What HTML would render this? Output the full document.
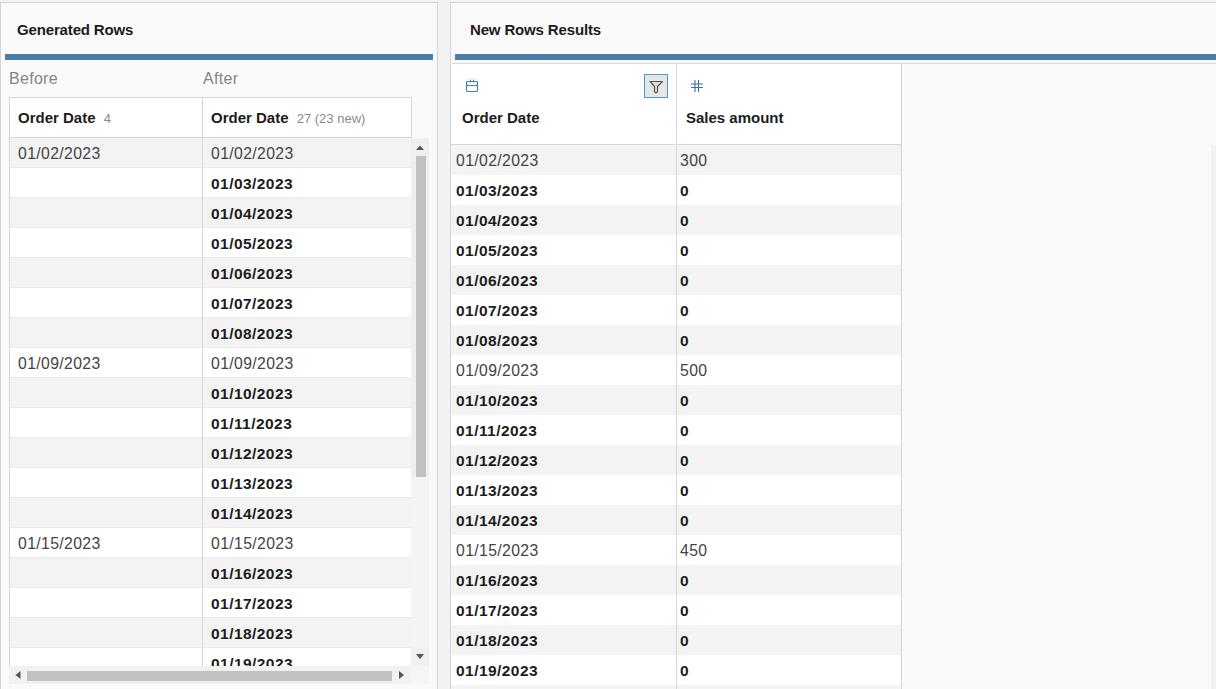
<!DOCTYPE html><html><head><meta charset="utf-8"><style>
*{margin:0;padding:0;box-sizing:border-box}
html,body{width:1216px;height:689px;overflow:hidden;background:#f2f2f2;font-family:"Liberation Sans",sans-serif}
.a{position:absolute}
.t{position:absolute;white-space:nowrap;line-height:16px}
.ttl{font-size:15px;font-weight:bold;color:#1c1c1c;letter-spacing:-0.15px}
.bar{position:absolute;top:53px;height:8px;background:#4a7ea8;border:1px solid #fff}
.lbl{font-size:16px;color:#858585;letter-spacing:0.3px}
.hd{font-size:15px;font-weight:bold;color:#1c1c1c}
.cnt{font-size:13px;font-weight:normal;color:#8a8a8a}
.r{font-size:15.75px;color:#444;letter-spacing:0.38px}
.b{font-size:15.5px;font-weight:bold;color:#1c1c1c;letter-spacing:0.45px}
</style></head><body>
<div class="a" style="left:0;top:2px;width:438px;height:700px;background:#fafafa;border:1px solid #d4d4d4;border-bottom:none"></div>
<div class="t ttl" style="left:17px;top:22px">Generated Rows</div>
<div class="bar" style="left:4px;width:430px"></div>
<div class="t lbl" style="left:9px;top:71px">Before</div>
<div class="t lbl" style="left:203px;top:71px">After</div>
<div class="a" style="left:9px;top:97px;width:403px;height:41px;background:#fff;border:1px solid #d6d6d6"></div>
<div class="a" style="left:202px;top:97px;width:1px;height:569px;background:#d6d6d6"></div>
<div class="t hd" style="left:18px;top:110px">Order Date <span class="cnt" style="margin-left:4px">4</span></div>
<div class="t hd" style="left:211px;top:110px">Order Date <span class="cnt" style="margin-left:4px">27 (23 new)</span></div>
<div class="a" style="left:9px;top:138px;width:402px;height:528px;overflow:hidden;border-left:1px solid #d6d6d6">
<div class="a" style="left:0;top:0px;width:401px;height:30px;background:#f3f3f3;border-bottom:1px solid #ebebeb"></div>
<div class="t r" style="left:8px;top:8px">01/02/2023</div>
<div class="t r" style="left:201px;top:8px">01/02/2023</div>
<div class="a" style="left:0;top:30px;width:401px;height:30px;background:#ffffff;border-bottom:1px solid #ebebeb"></div>
<div class="t b" style="left:201px;top:38px">01/03/2023</div>
<div class="a" style="left:0;top:60px;width:401px;height:30px;background:#f3f3f3;border-bottom:1px solid #ebebeb"></div>
<div class="t b" style="left:201px;top:68px">01/04/2023</div>
<div class="a" style="left:0;top:90px;width:401px;height:30px;background:#ffffff;border-bottom:1px solid #ebebeb"></div>
<div class="t b" style="left:201px;top:98px">01/05/2023</div>
<div class="a" style="left:0;top:120px;width:401px;height:30px;background:#f3f3f3;border-bottom:1px solid #ebebeb"></div>
<div class="t b" style="left:201px;top:128px">01/06/2023</div>
<div class="a" style="left:0;top:150px;width:401px;height:30px;background:#ffffff;border-bottom:1px solid #ebebeb"></div>
<div class="t b" style="left:201px;top:158px">01/07/2023</div>
<div class="a" style="left:0;top:180px;width:401px;height:30px;background:#f3f3f3;border-bottom:1px solid #ebebeb"></div>
<div class="t b" style="left:201px;top:188px">01/08/2023</div>
<div class="a" style="left:0;top:210px;width:401px;height:30px;background:#ffffff;border-bottom:1px solid #ebebeb"></div>
<div class="t r" style="left:8px;top:218px">01/09/2023</div>
<div class="t r" style="left:201px;top:218px">01/09/2023</div>
<div class="a" style="left:0;top:240px;width:401px;height:30px;background:#f3f3f3;border-bottom:1px solid #ebebeb"></div>
<div class="t b" style="left:201px;top:248px">01/10/2023</div>
<div class="a" style="left:0;top:270px;width:401px;height:30px;background:#ffffff;border-bottom:1px solid #ebebeb"></div>
<div class="t b" style="left:201px;top:278px">01/11/2023</div>
<div class="a" style="left:0;top:300px;width:401px;height:30px;background:#f3f3f3;border-bottom:1px solid #ebebeb"></div>
<div class="t b" style="left:201px;top:308px">01/12/2023</div>
<div class="a" style="left:0;top:330px;width:401px;height:30px;background:#ffffff;border-bottom:1px solid #ebebeb"></div>
<div class="t b" style="left:201px;top:338px">01/13/2023</div>
<div class="a" style="left:0;top:360px;width:401px;height:30px;background:#f3f3f3;border-bottom:1px solid #ebebeb"></div>
<div class="t b" style="left:201px;top:368px">01/14/2023</div>
<div class="a" style="left:0;top:390px;width:401px;height:30px;background:#ffffff;border-bottom:1px solid #ebebeb"></div>
<div class="t r" style="left:8px;top:398px">01/15/2023</div>
<div class="t r" style="left:201px;top:398px">01/15/2023</div>
<div class="a" style="left:0;top:420px;width:401px;height:30px;background:#f3f3f3;border-bottom:1px solid #ebebeb"></div>
<div class="t b" style="left:201px;top:428px">01/16/2023</div>
<div class="a" style="left:0;top:450px;width:401px;height:30px;background:#ffffff;border-bottom:1px solid #ebebeb"></div>
<div class="t b" style="left:201px;top:458px">01/17/2023</div>
<div class="a" style="left:0;top:480px;width:401px;height:30px;background:#f3f3f3;border-bottom:1px solid #ebebeb"></div>
<div class="t b" style="left:201px;top:488px">01/18/2023</div>
<div class="a" style="left:0;top:510px;width:401px;height:30px;background:#ffffff;border-bottom:1px solid #ebebeb"></div>
<div class="t b" style="left:201px;top:518px">01/19/2023</div>
<div class="a" style="left:0;top:540px;width:401px;height:30px;background:#f3f3f3;border-bottom:1px solid #ebebeb"></div>
<div class="t b" style="left:201px;top:548px">01/20/2023</div>
<div class="a" style="left:192px;top:0;width:1px;height:528px;background:#d6d6d6"></div>
</div>
<div class="a" style="left:411px;top:138px;width:18px;height:528px;background:#f4f4f4"></div><div class="a" style="left:411px;top:138px;width:18px;height:339px;background:#efefef"></div><div class="a" style="left:411px;top:648px;width:18px;height:18px;background:#f0f0f0"></div>
<svg class="a" style="left:411px;top:138px" width="18" height="528"><path d="M5 12h8l-4-4.5z" fill="#555"/><rect x="5" y="18" width="10" height="321" fill="#c1c1c1"/><path d="M5 516h8l-4 5z" fill="#555"/></svg>
<div class="a" style="left:9px;top:666px;width:402px;height:18px;background:#f1f1f1"></div><div class="a" style="left:411px;top:666px;width:18px;height:18px;background:#f5f5f5"></div>
<svg class="a" style="left:9px;top:666px" width="402" height="18"><path d="M11.5 5v8l-5-4z" fill="#555"/><rect x="18" y="5" width="365" height="10" fill="#c1c1c1"/><path d="M390 5v8l5-4z" fill="#555"/></svg>
<div class="a" style="left:450px;top:2px;width:800px;height:700px;background:#fafafa;border:1px solid #d4d4d4;border-bottom:none;border-right:none"></div>
<div class="t ttl" style="left:470px;top:22px">New Rows Results</div>
<div class="bar" style="left:454px;width:800px"></div>
<div class="a" style="left:452px;top:63px;width:800px;height:1px;background:#d8d8d8"></div>
<div class="a" style="left:451px;top:64px;width:451px;height:81px;background:#fff;border-bottom:1px solid #d8d8d8"></div>
<div class="a" style="left:901px;top:64px;width:1px;height:640px;background:#d4d4d4"></div>
<div class="a" style="left:676px;top:64px;width:1px;height:640px;background:#d8d8d8"></div>
<svg class="a" style="left:460px;top:74px" width="24" height="24"><g fill="none" stroke="#4a7ea5" stroke-width="1.1"><rect x="6.5" y="7.5" width="11" height="10" rx="1"/><path d="M6.5 11.5h11M10.5 5.5v3M13.5 5.5v3"/></g></svg>
<svg class="a" style="left:644px;top:74px" width="24" height="24"><rect x="0.5" y="0.5" width="23" height="23" fill="#e6e6e6" stroke="#4a9be0"/><path d="M6 7.5h12.5l-5 5v4.8a1.5 1.5 0 0 1 -3 0v-4.8z" fill="#dedede" stroke="#555" stroke-width="1.2" stroke-linejoin="round"/></svg>
<svg class="a" style="left:686px;top:74px" width="24" height="24"><g stroke="#3f7099" stroke-width="1.1"><path d="M9 6v12M12.5 6v12M5 10h12M5 13.5h12"/></g></svg>
<div class="t hd" style="left:462px;top:110px">Order Date</div>
<div class="t hd" style="left:686px;top:110px">Sales amount</div>
<div class="a" style="left:451px;top:145px;width:450px;height:544px;overflow:hidden">
<div class="a" style="left:0;top:0px;width:450px;height:30px;background:#f3f3f3"></div>
<div class="t r" style="left:5px;top:8px">01/02/2023</div>
<div class="t r" style="left:229px;top:8px">300</div>
<div class="a" style="left:0;top:30px;width:450px;height:30px;background:#ffffff"></div>
<div class="t b" style="left:5px;top:38px">01/03/2023</div>
<div class="t b" style="left:229px;top:38px">0</div>
<div class="a" style="left:0;top:60px;width:450px;height:30px;background:#f3f3f3"></div>
<div class="t b" style="left:5px;top:68px">01/04/2023</div>
<div class="t b" style="left:229px;top:68px">0</div>
<div class="a" style="left:0;top:90px;width:450px;height:30px;background:#ffffff"></div>
<div class="t b" style="left:5px;top:98px">01/05/2023</div>
<div class="t b" style="left:229px;top:98px">0</div>
<div class="a" style="left:0;top:120px;width:450px;height:30px;background:#f3f3f3"></div>
<div class="t b" style="left:5px;top:128px">01/06/2023</div>
<div class="t b" style="left:229px;top:128px">0</div>
<div class="a" style="left:0;top:150px;width:450px;height:30px;background:#ffffff"></div>
<div class="t b" style="left:5px;top:158px">01/07/2023</div>
<div class="t b" style="left:229px;top:158px">0</div>
<div class="a" style="left:0;top:180px;width:450px;height:30px;background:#f3f3f3"></div>
<div class="t b" style="left:5px;top:188px">01/08/2023</div>
<div class="t b" style="left:229px;top:188px">0</div>
<div class="a" style="left:0;top:210px;width:450px;height:30px;background:#ffffff"></div>
<div class="t r" style="left:5px;top:218px">01/09/2023</div>
<div class="t r" style="left:229px;top:218px">500</div>
<div class="a" style="left:0;top:240px;width:450px;height:30px;background:#f3f3f3"></div>
<div class="t b" style="left:5px;top:248px">01/10/2023</div>
<div class="t b" style="left:229px;top:248px">0</div>
<div class="a" style="left:0;top:270px;width:450px;height:30px;background:#ffffff"></div>
<div class="t b" style="left:5px;top:278px">01/11/2023</div>
<div class="t b" style="left:229px;top:278px">0</div>
<div class="a" style="left:0;top:300px;width:450px;height:30px;background:#f3f3f3"></div>
<div class="t b" style="left:5px;top:308px">01/12/2023</div>
<div class="t b" style="left:229px;top:308px">0</div>
<div class="a" style="left:0;top:330px;width:450px;height:30px;background:#ffffff"></div>
<div class="t b" style="left:5px;top:338px">01/13/2023</div>
<div class="t b" style="left:229px;top:338px">0</div>
<div class="a" style="left:0;top:360px;width:450px;height:30px;background:#f3f3f3"></div>
<div class="t b" style="left:5px;top:368px">01/14/2023</div>
<div class="t b" style="left:229px;top:368px">0</div>
<div class="a" style="left:0;top:390px;width:450px;height:30px;background:#ffffff"></div>
<div class="t r" style="left:5px;top:398px">01/15/2023</div>
<div class="t r" style="left:229px;top:398px">450</div>
<div class="a" style="left:0;top:420px;width:450px;height:30px;background:#f3f3f3"></div>
<div class="t b" style="left:5px;top:428px">01/16/2023</div>
<div class="t b" style="left:229px;top:428px">0</div>
<div class="a" style="left:0;top:450px;width:450px;height:30px;background:#ffffff"></div>
<div class="t b" style="left:5px;top:458px">01/17/2023</div>
<div class="t b" style="left:229px;top:458px">0</div>
<div class="a" style="left:0;top:480px;width:450px;height:30px;background:#f3f3f3"></div>
<div class="t b" style="left:5px;top:488px">01/18/2023</div>
<div class="t b" style="left:229px;top:488px">0</div>
<div class="a" style="left:0;top:510px;width:450px;height:30px;background:#ffffff"></div>
<div class="t b" style="left:5px;top:518px">01/19/2023</div>
<div class="t b" style="left:229px;top:518px">0</div>
<div class="a" style="left:0;top:540px;width:450px;height:30px;background:#f3f3f3"></div>
<div class="t b" style="left:5px;top:548px">01/20/2023</div>
<div class="t b" style="left:229px;top:548px">0</div>
<div class="a" style="left:225px;top:0;width:1px;height:544px;background:#d8d8d8"></div>
</div>
<div class="a" style="left:1211px;top:145px;width:5px;height:544px;background:#f2f2f2"></div>
</body></html>
